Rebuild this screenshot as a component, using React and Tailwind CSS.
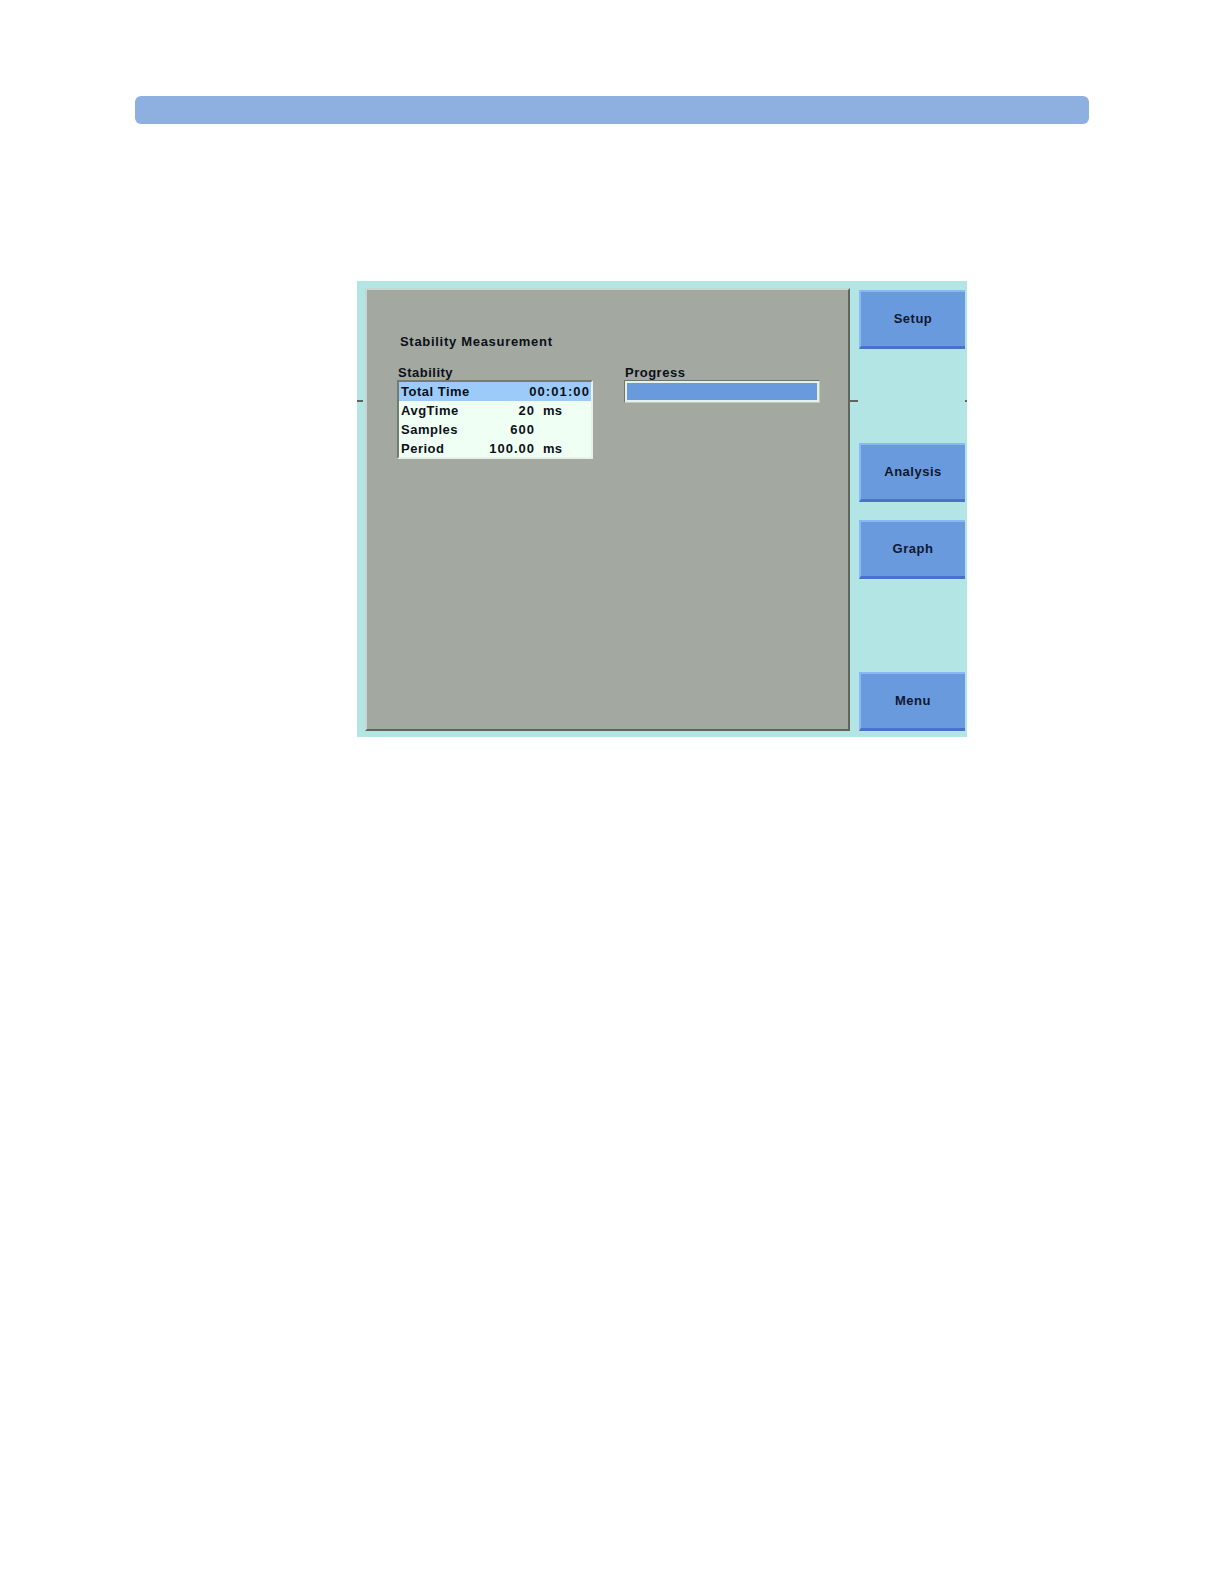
const font = { fontFamily: '"Liberation Sans", Arial, sans-serif' };

const rows = [
  { label: "AvgTime", value: "20", unit: "ms" },
  { label: "Samples", value: "600", unit: "" },
  { label: "Period", value: "100.00", unit: "ms" },
];

const buttons = [
  { label: "Setup", gap: "mt-0" },
  { label: "Analysis", gap: "mt-[94px]" },
  { label: "Graph", gap: "mt-[18px]" },
  { label: "Menu", gap: "mt-[93px]" },
];

function SoftKey({ label, gap }) {
  return (
    <div
      className={`${gap} w-[106px] h-[59px] flex items-center justify-center bg-[#6a9ade] border-t-2 border-l-2 border-[#8ab8f4] border-b-[3px] border-b-[#4a72c8] border-r-[#6a9ade] text-[13px] font-bold tracking-[0.5px] text-[#101830]`}
    >
      {label}
    </div>
  );
}

export default function App() {
  return (
    <div className="min-h-screen bg-white overflow-hidden pt-[96px]" style={font}>
      {/* header bar */}
      <div className="ml-[135px] w-[954px] h-[28px] rounded-md bg-[#8eb0e0]" />

      {/* instrument screen */}
      <div className="relative mt-[157px] ml-[357px] w-[610px] h-[456px] bg-[#b2e5e4] flex">
        {/* tick marks */}
        <div className="absolute left-0 top-[119px] w-[6px] h-[2px] bg-[#5e665e]" />
        <div className="absolute left-[493px] top-[119px] w-[8px] h-[2px] bg-[#5e665e]" />
        <div className="absolute right-0 top-[119px] w-[2px] h-[2px] bg-[#5e665e]" />

        {/* main panel */}
        <div className="mt-[7px] ml-[8px] w-[485px] h-[443px] bg-[#a3a9a1] border-l-2 border-t-2 border-[#c4d6d0] border-r-2 border-b-2 border-r-[#5e665e] border-b-[#5e665e] pl-[30px] pt-[44px] text-[#0c1018]">
          <div className="ml-[3px] h-[16px] leading-[16px] text-[13px] font-bold tracking-[0.7px]">Stability Measurement</div>

          <div className="mt-[15px] flex gap-[31px]">
            {/* stability table */}
            <div className="w-[196px]">
              <div className="ml-[1px] h-[15px] leading-[15px] text-[13px] font-bold tracking-[0.5px]">Stability</div>
              <div className="h-[79px] bg-[#f0fff4] border-l-2 border-t-2 border-[#737b73] border-r-2 border-b-2 border-r-[#e8f0e8] border-b-[#e8f0e8] text-[13px] font-bold tracking-[0.5px]">
                <div className="h-[19px] leading-[19px] bg-[#9ccbf9] flex justify-between pl-[2px] pr-[1px]">
                  <span>Total Time</span>
                  <span className="tracking-[1.1px]">00:01:00</span>
                </div>
                {rows.map((r) => (
                  <div key={r.label} className="h-[19px] leading-[19px] flex">
                    <div className="w-[136px] flex justify-between pl-[2px]">
                      <span>{r.label}</span>
                      <span className="tracking-[1px]">{r.value}</span>
                    </div>
                    <span className="ml-[8px] tracking-[0.3px]">{r.unit}</span>
                  </div>
                ))}
              </div>
            </div>

            {/* progress */}
            <div className="w-[196px]">
              <div className="ml-[1px] h-[15px] leading-[15px] text-[13px] font-bold tracking-[0.5px]">Progress</div>
              <div className="h-[23px] border-l border-t border-[#6e766e] border-r border-b border-r-[#c0c8c0] border-b-[#c0c8c0]">
                <div className="h-full border-2 border-[#e6f0ec] bg-[#6a9ade]" />
              </div>
            </div>
          </div>
        </div>

        {/* soft keys */}
        <div className="ml-[9px] mt-[9px] flex flex-col">
          {buttons.map((b) => (
            <SoftKey key={b.label} {...b} />
          ))}
        </div>
      </div>
    </div>
  );
}
